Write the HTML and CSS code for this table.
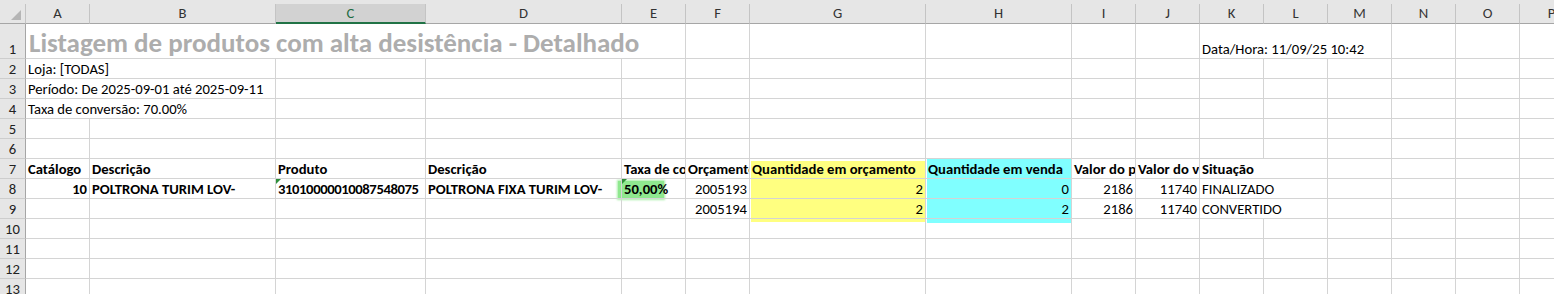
FILE: index.html
```html
<!DOCTYPE html>
<html lang="pt">
<head>
<meta charset="utf-8">
<title>Listagem de produtos com alta desistência</title>
<link rel="stylesheet" href="styles.css">
</head>
<body>
<div class="sheet">
  <div class="hl hl-yellow"></div>
  <div class="hl hl-cyan"></div>
  <div class="hl hl-green"></div>

  <div class="r hdr">
    <div class="hc corner"><svg class="tri" width="26" height="20" viewBox="0 0 26 20"><polygon points="21,6 21,16 11,16" fill="#b5b5b5"/></svg></div>
    <div class="hc">A</div><div class="hc">B</div><div class="hc sel">C</div><div class="hc">D</div><div class="hc">E</div><div class="hc">F</div><div class="hc">G</div><div class="hc">H</div><div class="hc">I</div><div class="hc">J</div><div class="hc">K</div><div class="hc">L</div><div class="hc">M</div><div class="hc">N</div><div class="hc">O</div><div class="hc">P</div>
  </div>

  <div class="r r1">
    <div class="rh">1</div>
    <div class="c title s5">Listagem de produtos com alta desistência - Detalhado</div>
    <div class="c"></div><div class="c"></div><div class="c"></div><div class="c"></div><div class="c"></div>
    <div class="c s3">Data/Hora: 11/09/25 10:42</div>
    <div class="c"></div><div class="c"></div><div class="c"></div>
  </div>

  <div class="r">
    <div class="rh">2</div>
    <div class="c s2">Loja: [TODAS]</div>
    <div class="c"></div><div class="c"></div><div class="c"></div><div class="c"></div><div class="c"></div><div class="c"></div><div class="c"></div><div class="c"></div><div class="c"></div><div class="c"></div><div class="c"></div><div class="c"></div><div class="c"></div><div class="c"></div>
  </div>

  <div class="r">
    <div class="rh">3</div>
    <div class="c s2">Período: De 2025-09-01 até 2025-09-11</div>
    <div class="c"></div><div class="c"></div><div class="c"></div><div class="c"></div><div class="c"></div><div class="c"></div><div class="c"></div><div class="c"></div><div class="c"></div><div class="c"></div><div class="c"></div><div class="c"></div><div class="c"></div><div class="c"></div>
  </div>

  <div class="r">
    <div class="rh">4</div>
    <div class="c s2">Taxa de conversão: 70.00%</div>
    <div class="c"></div><div class="c"></div><div class="c"></div><div class="c"></div><div class="c"></div><div class="c"></div><div class="c"></div><div class="c"></div><div class="c"></div><div class="c"></div><div class="c"></div><div class="c"></div><div class="c"></div><div class="c"></div>
  </div>

  <div class="r">
    <div class="rh">5</div>
    <div class="c"></div><div class="c"></div><div class="c"></div><div class="c"></div><div class="c"></div><div class="c"></div><div class="c"></div><div class="c"></div><div class="c"></div><div class="c"></div><div class="c"></div><div class="c"></div><div class="c"></div><div class="c"></div><div class="c"></div><div class="c"></div>
  </div>

  <div class="r">
    <div class="rh">6</div>
    <div class="c"></div><div class="c"></div><div class="c"></div><div class="c"></div><div class="c"></div><div class="c"></div><div class="c"></div><div class="c"></div><div class="c"></div><div class="c"></div><div class="c"></div><div class="c"></div><div class="c"></div><div class="c"></div><div class="c"></div><div class="c"></div>
  </div>

  <div class="r">
    <div class="rh">7</div>
    <div class="c b">Catálogo</div>
    <div class="c b">Descrição</div>
    <div class="c b">Produto</div>
    <div class="c b">Descrição</div>
    <div class="c b">Taxa de conversão</div>
    <div class="c b">Orçamento</div>
    <div class="c b">Quantidade em orçamento</div>
    <div class="c b">Quantidade em venda</div>
    <div class="c b">Valor do produto</div>
    <div class="c b">Valor do vendido</div>
    <div class="c b s2">Situação</div>
    <div class="c"></div><div class="c"></div><div class="c"></div><div class="c"></div>
  </div>

  <div class="r">
    <div class="rh">8</div>
    <div class="c b num">10</div>
    <div class="c b">POLTRONA TURIM LOV-</div>
    <div class="c b code"><span class="flag"></span>31010000010087548075</div>
    <div class="c b">POLTRONA FIXA TURIM LOV-</div>
    <div class="c b"><span class="flag"></span>50,00%</div>
    <div class="c num">2005193</div>
    <div class="c num">2</div>
    <div class="c num">0</div>
    <div class="c num">2186</div>
    <div class="c num">11740</div>
    <div class="c s2">FINALIZADO</div>
    <div class="c"></div><div class="c"></div><div class="c"></div><div class="c"></div>
  </div>

  <div class="r">
    <div class="rh">9</div>
    <div class="c"></div><div class="c"></div><div class="c"></div><div class="c"></div><div class="c"></div>
    <div class="c num">2005194</div>
    <div class="c num">2</div>
    <div class="c num">2</div>
    <div class="c num">2186</div>
    <div class="c num">11740</div>
    <div class="c s2">CONVERTIDO</div>
    <div class="c"></div><div class="c"></div><div class="c"></div><div class="c"></div>
  </div>

  <div class="r">
    <div class="rh">10</div>
    <div class="c"></div><div class="c"></div><div class="c"></div><div class="c"></div><div class="c"></div><div class="c"></div><div class="c"></div><div class="c"></div><div class="c"></div><div class="c"></div><div class="c"></div><div class="c"></div><div class="c"></div><div class="c"></div><div class="c"></div><div class="c"></div>
  </div>

  <div class="r">
    <div class="rh">11</div>
    <div class="c"></div><div class="c"></div><div class="c"></div><div class="c"></div><div class="c"></div><div class="c"></div><div class="c"></div><div class="c"></div><div class="c"></div><div class="c"></div><div class="c"></div><div class="c"></div><div class="c"></div><div class="c"></div><div class="c"></div><div class="c"></div>
  </div>

  <div class="r">
    <div class="rh">12</div>
    <div class="c"></div><div class="c"></div><div class="c"></div><div class="c"></div><div class="c"></div><div class="c"></div><div class="c"></div><div class="c"></div><div class="c"></div><div class="c"></div><div class="c"></div><div class="c"></div><div class="c"></div><div class="c"></div><div class="c"></div><div class="c"></div>
  </div>

  <div class="r">
    <div class="rh">13</div>
    <div class="c"></div><div class="c"></div><div class="c"></div><div class="c"></div><div class="c"></div><div class="c"></div><div class="c"></div><div class="c"></div><div class="c"></div><div class="c"></div><div class="c"></div><div class="c"></div><div class="c"></div><div class="c"></div><div class="c"></div><div class="c"></div>
  </div>
</div>
</body>
</html>
```
FILE: styles.css
```css
html, body {
  margin: 0;
  padding: 0;
  background: #ffffff;
  overflow: hidden;
}

.sheet {
  position: relative;
  width: 1584px;
  font-family: "Carlito", "Lato", "Liberation Sans", sans-serif;
  font-size: 14.67px;
  color: #000;
}

.r {
  position: relative;
  z-index: 1;
  display: grid;
  grid-template-columns: 26px 64px 186px 150px 196px 64px 64px 176px 146px 64px 64px 64px 64px 64px 64px 64px 64px;
  height: 20px;
}

.r1 { height: 35px; }

.hdr {
  height: 24px;
  background: #e6e6e6;
}

.hc {
  box-sizing: border-box;
  margin-top: 4px;
  height: 20px;
  border-right: 1px solid #c4c4c4;
  border-bottom: 1px solid #a6a6a6;
  text-align: center;
  line-height: 19px;
  color: #333;
}

.hc.corner { position: relative; }
.hc.corner .tri { position: absolute; left: 0; top: 0; }

.hc.sel {
  background: #d2d2d2;
  border-bottom: 2px solid #217346;
  color: #1d6b40;
}

.rh {
  box-sizing: border-box;
  background: #e6e6e6;
  border-right: 1px solid #a6a6a6;
  border-bottom: 1px solid #cdcdcd;
  display: flex;
  align-items: flex-end;
  justify-content: center;
  line-height: 17px;
  color: #222;
}

.c {
  position: relative;
  box-sizing: border-box;
  border-right: 1px solid #d4d4d4;
  border-bottom: 1px solid #d4d4d4;
  overflow: hidden;
  white-space: nowrap;
  display: flex;
  align-items: flex-end;
  padding: 0 2px;
  line-height: 17px;
}

.num { justify-content: flex-end; }
.b { font-weight: bold; }
.s2 { grid-column: span 2; }
.s3 { grid-column: span 3; }
.s5 { grid-column: span 5; }

.code { letter-spacing: -0.4px; }

.title {
  font-size: 27px;
  font-weight: bold;
  color: #adadad;
  line-height: 31px;
  padding-left: 3px;
}

.flag {
  position: absolute;
  left: 0;
  top: 0;
  width: 0;
  height: 0;
  border-top: 5px solid #2f8f3a;
  border-right: 5px solid transparent;
}

.hl {
  position: absolute;
  z-index: 0;
}

.hl-yellow {
  left: 751px;
  top: 161px;
  width: 174px;
  height: 61px;
  background: #ffff80;
}

.hl-cyan {
  left: 927px;
  top: 158px;
  width: 144px;
  height: 65px;
  background: #80ffff;
}

.hl-green {
  left: 618px;
  top: 181px;
  width: 46px;
  height: 18px;
  background: #8fe88f;
  box-shadow: 0 0 2px 1px #a8eea8;
}
```
